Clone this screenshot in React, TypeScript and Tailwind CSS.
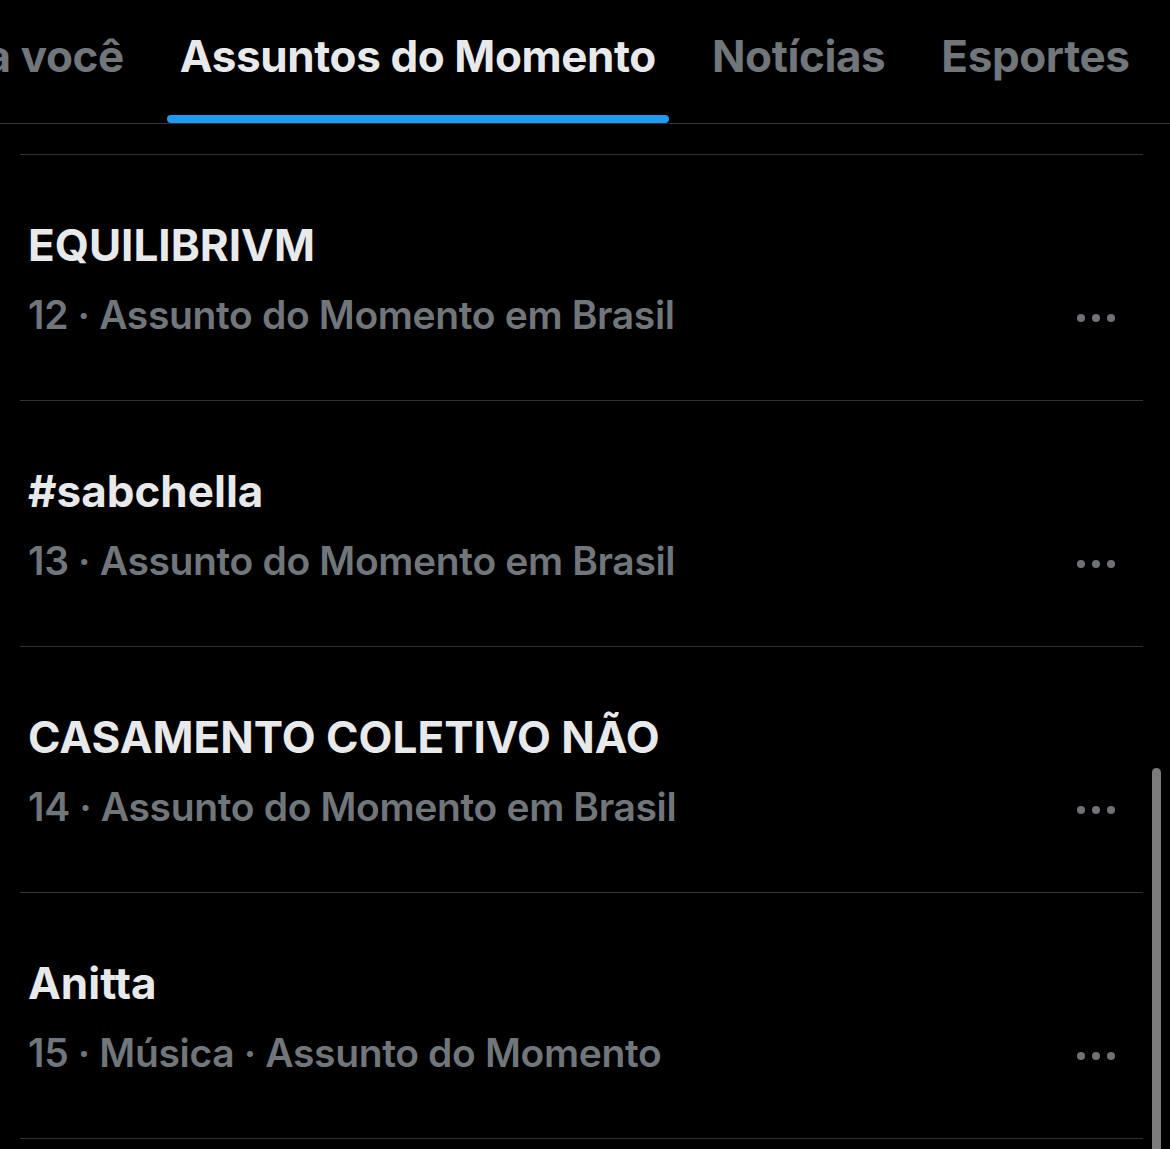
import React from "react";

const items = [
  { title: "EQUILIBRIVM", sub: "12 · Assunto do Momento em Brasil" },
  { title: "#sabchella", sub: "13 · Assunto do Momento em Brasil" },
  { title: "CASAMENTO COLETIVO NÃO", sub: "14 · Assunto do Momento em Brasil" },
  { title: "Anitta", sub: "15 · Música · Assunto do Momento" },
];

function Dots() {
  return (
    <div className="flex items-center gap-[7px] pt-[6px]">
      <span className="w-[8px] h-[8px] rounded-full bg-[#6e7175]" />
      <span className="w-[8px] h-[8px] rounded-full bg-[#6e7175]" />
      <span className="w-[8px] h-[8px] rounded-full bg-[#6e7175]" />
    </div>
  );
}

export default function App() {
  return (
    <div
      className="relative w-[1170px] h-[1149px] bg-black overflow-hidden"
      style={{ fontFamily: "Inter, 'Noto Sans', sans-serif" }}
    >
      <div className="h-[124px] border-b border-[#2f3336] flex items-end overflow-hidden">
        <div className="flex ml-[-112px] shrink-0">
          {[
            { label: "Para você", active: false },
            { label: "Assuntos do Momento", active: true },
            { label: "Notícias", active: false },
            { label: "Esportes", active: false },
          ].map((t) => (
            <div key={t.label} className="flex flex-col items-center px-[28px] shrink-0">
              <div
                className={
                  "text-[44px] font-bold leading-[54px] whitespace-nowrap tracking-[-0.4px] " +
                  (t.active ? "text-[#e7e9ea]" : "text-[#71767b]")
                }
              >
                {t.label}
              </div>
              <div
                className={
                  "mt-[32px] h-[8px] self-stretch mx-[-13px] rounded-full " +
                  (t.active ? "bg-[#1d9bf0]" : "bg-transparent")
                }
              />
            </div>
          ))}
        </div>
      </div>
      <div className="pt-[30px] pl-[20px] pr-[27px]">
        <div className="border-t border-[#2f3336]" />
        {items.map((it) => (
          <div key={it.title} className="border-b border-[#2f3336] h-[246px] pl-[8px] pr-[28px] pt-[65px]">
            <div className="text-[44px] font-bold leading-[50px] text-[#e7e9ea]">
              {it.title}
            </div>
            <div className="flex items-center justify-between mt-[21px]">
              <div className="text-[39px] font-semibold leading-[48px] text-[#71767b] tracking-[-0.35px]">
                {it.sub}
              </div>
              <Dots />
            </div>
          </div>
        ))}
      </div>
      <div className="absolute left-[1152px] top-[768px] w-[9px] h-[400px] rounded-full bg-[#7b7b7b]" />
    </div>
  );
}
